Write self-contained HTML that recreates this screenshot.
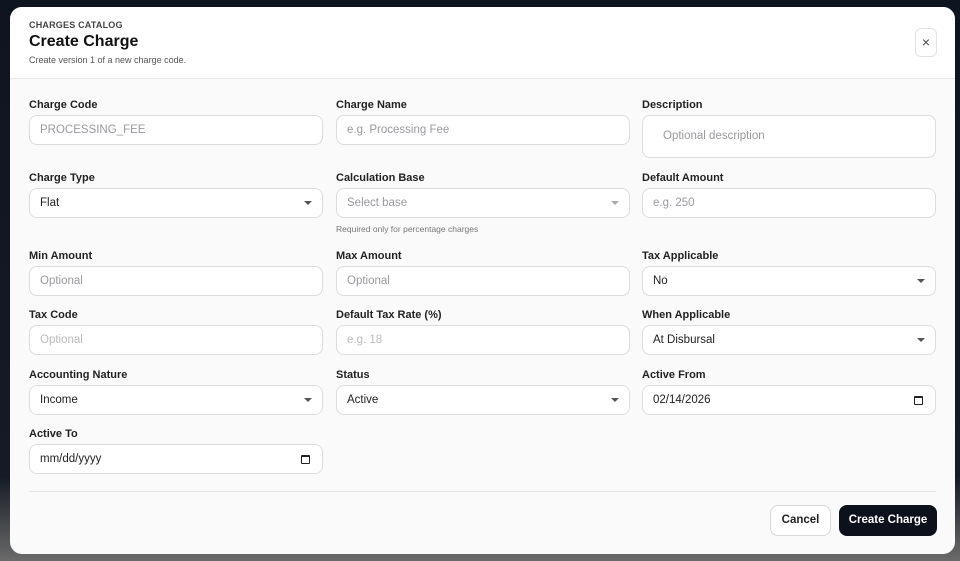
<!DOCTYPE html>
<html><head><style>
*{box-sizing:border-box;margin:0;padding:0}
body{width:960px;height:561px;overflow:hidden;background:linear-gradient(180deg,#0e1420 0%,#151b26 85%,#6a6a6a 100%);font-family:"Liberation Sans",sans-serif;position:relative}
.m{position:absolute;left:10px;top:7px;width:945px;height:547px;background:#fafafa;border-radius:12px;overflow:hidden}
.hd{height:72px;background:#fff;border-bottom:1px solid #e8e8ea;position:relative}
.k{position:absolute;left:19px;top:13px;font-size:9px;font-weight:700;color:#444;letter-spacing:.2px}
.t{position:absolute;left:19px;top:26px;font-size:16px;font-weight:700;color:#111}
.s{position:absolute;left:19px;top:48px;font-size:9px;color:#555}
.x{position:absolute;left:905px;top:21px;width:22px;height:29px;border:1px solid #e2e2e5;border-radius:6px;background:#fff;color:#444;font-size:14px;text-align:center;line-height:27px}
.f{position:absolute;width:294px}
.l{font-size:11px;font-weight:700;color:#222;height:11px;line-height:11px;margin-top:1px}
.i{margin-top:4px;height:30px;border:1px solid #dcdce0;border-radius:8px;background:#fff;font-size:11.5px;line-height:28px;padding-left:10px;color:#222;position:relative}
.p{color:#9a9a9f}.pp{color:#bbb}
.a:after{content:"";position:absolute;right:10px;top:12px;border-left:4px solid transparent;border-right:4px solid transparent;border-top:4px solid #555}
.a.g:after{border-top-color:#aaa}
.c{position:absolute;right:12px;top:10px;width:9px;height:9px;border:1.5px solid #222;border-top-width:2.5px;border-radius:1px}
.h{font-size:8.5px;color:#777;margin-top:6px}
.dv{position:absolute;left:19px;right:19px;top:484px;border-top:1px solid #e3e3e6}
.b{position:absolute;top:498px;height:31px;border-radius:8px;font-size:11.5px;font-weight:700;line-height:29px;text-align:center}
</style></head><body>
<div class="m">
<div class="hd"><div class="k">CHARGES CATALOG</div><div class="t">Create Charge</div><div class="s">Create version 1 of a new charge code.</div><div class="x">×</div></div>

<div class="f" style="left:19px;top:92px"><div class="l">Charge Code</div><div class="i p">PROCESSING_FEE</div></div>
<div class="f" style="left:326px;top:92px"><div class="l">Charge Name</div><div class="i p">e.g. Processing Fee</div></div>
<div class="f" style="left:632px;top:92px"><div class="l">Description</div><div class="i p" style="height:43px;line-height:41px;padding-left:20px">Optional description</div></div>

<div class="f" style="left:19px;top:165px"><div class="l">Charge Type</div><div class="i a">Flat</div></div>
<div class="f" style="left:326px;top:165px"><div class="l">Calculation Base</div><div class="i a g p">Select base</div><div class="h">Required only for percentage charges</div></div>
<div class="f" style="left:632px;top:165px"><div class="l">Default Amount</div><div class="i p">e.g. 250</div></div>

<div class="f" style="left:19px;top:243px"><div class="l">Min Amount</div><div class="i p">Optional</div></div>
<div class="f" style="left:326px;top:243px"><div class="l">Max Amount</div><div class="i p">Optional</div></div>
<div class="f" style="left:632px;top:243px"><div class="l">Tax Applicable</div><div class="i a">No</div></div>

<div class="f" style="left:19px;top:302px"><div class="l">Tax Code</div><div class="i pp">Optional</div></div>
<div class="f" style="left:326px;top:302px"><div class="l">Default Tax Rate (%)</div><div class="i pp">e.g. 18</div></div>
<div class="f" style="left:632px;top:302px"><div class="l">When Applicable</div><div class="i a">At Disbursal</div></div>

<div class="f" style="left:19px;top:362px"><div class="l">Accounting Nature</div><div class="i a">Income</div></div>
<div class="f" style="left:326px;top:362px"><div class="l">Status</div><div class="i a">Active</div></div>
<div class="f" style="left:632px;top:362px"><div class="l">Active From</div><div class="i">02/14/2026<span class="c"></span></div></div>

<div class="f" style="left:19px;top:421px"><div class="l">Active To</div><div class="i">mm/dd/yyyy<span class="c"></span></div></div>

<div class="dv"></div>
<div class="b" style="left:760px;width:61px;border:1px solid #d8d8dc;background:#fff;color:#222">Cancel</div>
<div class="b" style="left:829px;width:98px;background:#0d111c;color:#fff;line-height:31px">Create Charge</div>
</div>
</body></html>
